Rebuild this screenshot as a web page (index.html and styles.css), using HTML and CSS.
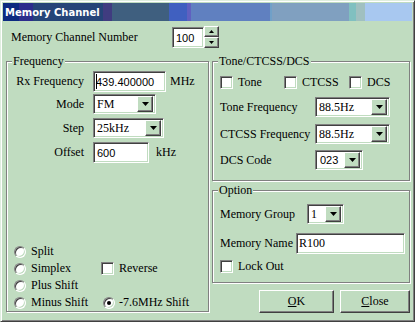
FILE: index.html
```html
<!DOCTYPE html>
<html lang="en">
<head>
    <meta charset="UTF-8">
    <title>Memory Channel</title>
    <link rel="stylesheet" href="styles.css">
</head>
<body>

    <div class="window">
        <div class="titlebar"><span class="title">Memory Channel</span></div>

        <div class="channel-row">
            <span class="chan-label">Memory Channel Number</span>
            <div class="sunken field sans spin-field">100</div>
            <div class="spin-btns">
                <div class="raised spin-btn"><svg width="5" height="3" viewBox="0 0 5 3"><polygon points="2.5,0 5,3 0,3" fill="#000"/></svg></div>
                <div class="raised spin-btn"><svg width="5" height="3" viewBox="0 0 5 3"><polygon points="0,0 5,0 2.5,3" fill="#000"/></svg></div>
            </div>
        </div>

        <div class="groups">
            <!-- left: frequency -->
            <div class="group freq">
                <div class="legend">Frequency</div>

                <div class="frow fr1">
                    <span class="flabel">Rx Frequency</span>
                    <div class="sunken field sans rx"><span class="caret"></span>439.400000</div>
                    <span class="unit mhz">MHz</span>
                </div>
                <div class="frow fr2">
                    <span class="flabel">Mode</span>
                    <div class="sunken combo mode"><span class="combo-text">FM</span><div class="raised drop"><svg width="7" height="4" viewBox="0 0 7 4"><polygon points="0,0 7,0 3.5,4" fill="#000"/></svg></div></div>
                </div>
                <div class="frow fr3">
                    <span class="flabel">Step</span>
                    <div class="sunken combo step"><span class="combo-text">25kHz</span><div class="raised drop"><svg width="7" height="4" viewBox="0 0 7 4"><polygon points="0,0 7,0 3.5,4" fill="#000"/></svg></div></div>
                </div>
                <div class="frow fr4">
                    <span class="flabel">Offset</span>
                    <div class="sunken field sans offset">600</div>
                    <span class="unit khz">kHz</span>
                </div>

                <div class="radios">
                    <div class="opt"><span class="radio"></span>Split</div>
                    <div></div>
                    <div class="opt"><span class="radio"></span>Simplex</div>
                    <div class="opt col2cb"><span class="sunken check"></span>Reverse</div>
                    <div class="opt"><span class="radio"></span>Plus Shift</div>
                    <div></div>
                    <div class="opt"><span class="radio"></span>Minus Shift</div>
                    <div class="opt col2rd"><span class="radio on"></span>-7.6MHz Shift</div>
                </div>
            </div>

            <!-- right column -->
            <div class="right-col">
                <div class="group tone">
                    <div class="legend">Tone/CTCSS/DCS</div>
                    <div class="checks">
                        <div class="opt"><span class="sunken check"></span>Tone</div>
                        <div class="opt"><span class="sunken check"></span>CTCSS</div>
                        <div class="opt"><span class="sunken check"></span>DCS</div>
                    </div>
                    <div class="trow tr1">
                        <span class="tlabel">Tone Frequency</span>
                        <div class="sunken combo tcombo"><span class="combo-text">88.5Hz</span><div class="raised drop"><svg width="7" height="4" viewBox="0 0 7 4"><polygon points="0,0 7,0 3.5,4" fill="#000"/></svg></div></div>
                    </div>
                    <div class="trow tr2">
                        <span class="tlabel">CTCSS Frequency</span>
                        <div class="sunken combo tcombo"><span class="combo-text">88.5Hz</span><div class="raised drop"><svg width="7" height="4" viewBox="0 0 7 4"><polygon points="0,0 7,0 3.5,4" fill="#000"/></svg></div></div>
                    </div>
                    <div class="trow tr3">
                        <span class="tlabel">DCS Code</span>
                        <div class="sunken combo dcs"><span class="combo-text sans">023</span><div class="raised drop"><svg width="7" height="4" viewBox="0 0 7 4"><polygon points="0,0 7,0 3.5,4" fill="#000"/></svg></div></div>
                    </div>
                </div>

                <div class="group option">
                    <div class="legend">Option</div>
                    <div class="trow or1">
                        <span class="glabel">Memory Group</span>
                        <div class="sunken combo grp"><span class="combo-text">1</span><div class="raised drop"><svg width="7" height="4" viewBox="0 0 7 4"><polygon points="0,0 7,0 3.5,4" fill="#000"/></svg></div></div>
                    </div>
                    <div class="trow or2">
                        <span class="nlabel">Memory Name</span>
                        <div class="sunken field name">R100</div>
                    </div>
                    <div class="opt lock"><span class="sunken check"></span>Lock Out</div>
                </div>

                <div class="buttons">
                    <div class="raised button ok"><u>O</u>K</div>
                    <div class="raised button close"><u>C</u>lose</div>
                </div>
            </div>
        </div>
    </div>

</body>
</html>
```

FILE: styles.css
```css
body{
    margin: 0;
    background: #c0dcc0;
    font-family: "Liberation Serif", serif;
    font-size: 12px;
    color: #000;
}

.sans{
    font-family: "Liberation Sans", sans-serif;
    font-size: 11px;
}

.window{
    width: 415px;
    height: 322px;
    box-sizing: border-box;
    border: 1px solid;
    border-color: #dfeedf #404040 #404040 #dfeedf;
    box-shadow: inset 1px 1px #fff, inset -1px -1px #808080;
    padding: 2px;
    background: #c0dcc0;
}

.titlebar{
    height: 18px;
    display: flex;
    align-items: center;
    padding-left: 2px;
    background: linear-gradient(to right,
        #0c2a80 0 16px, #2c2c8c 16px 30px, #254478 30px 100px,
        #403c80 100px 109px, #3f5f7f 109px 166px, #4060c0 166px 184px,
        #6060c0 184px 188px, #6080c0 188px 267px, #70a0c8 267px 269px,
        #80a0c0 269px 346px, #80c0c0 346px 353px, #a0c0c0 353px 362px,
        #a8c8f0 362px);
}

.title{
    color: #fff;
    font: bold 10px "DejaVu Sans", sans-serif;
}

/* 3d borders */
.sunken{
    box-sizing: border-box;
    background: #fff;
    border: 1px solid;
    border-color: #808080 #fff #fff #808080;
    box-shadow: inset 1px 1px #404040, inset -1px -1px #c0dcc0;
}

.raised{
    box-sizing: border-box;
    background: #c0dcc0;
    border: 1px solid;
    border-color: #fff #404040 #404040 #fff;
    box-shadow: inset -1px -1px #808080;
}

.field{
    display: flex;
    align-items: center;
    padding-left: 3px;
}

.caret{
    border-left: 1px solid #000;
    height: 15px;
    margin-right: -1px;
}

/* channel number */
.channel-row{
    display: flex;
    height: 22px;
    margin-top: 5px;
    padding-left: 8px;
}

.chan-label{
    width: 161px;
    line-height: 22px;
}

.spin-field{
    width: 32px;
    height: 21px;
    margin-top: 1px;
}

.spin-btns{
    display: flex;
    flex-direction: column;
}

.spin-btn{
    width: 15px;
    height: 11px;
    display: flex;
    align-items: center;
    justify-content: center;
}

/* groups */
.groups{
    display: grid;
    grid-template-columns: 203px 198px;
    column-gap: 3px;
    margin-top: 13px;
    padding-left: 3px;
}

.group{
    box-sizing: border-box;
    border: 1px solid #808080;
    box-shadow: inset 1px 1px #fff, 1px 1px #fff;
    display: flex;
    flex-direction: column;
}

.legend{
    width: fit-content;
    line-height: 14px;
    margin: -8px 0 0 5px;
    padding: 0 1px;
    background: #c0dcc0;
}

.freq{
    height: 251px;
}

.frow{
    display: flex;
    align-items: center;
}

.flabel{
    width: 77px;
    margin-right: 9px;
    text-align: right;
}

.fr1{ margin-top: 3px; }
.fr2{ margin-top: 2px; }
.fr3{ margin-top: 4px; }
.fr4{ margin-top: 4px; }

.rx{
    width: 73px;
    height: 21px;
    padding-left: 2px;
}

.offset{
    width: 56px;
    height: 21px;
}

.mhz{ margin-left: 4px; }
.khz{ margin-left: 7px; }

.combo{
    display: flex;
    align-items: center;
    height: 20px;
    padding: 2px;
}

.combo-text{
    flex: 1;
    padding-left: 1px;
}

.drop{
    width: 16px;
    height: 16px;
    display: flex;
    align-items: center;
    justify-content: center;
}

.mode{ width: 63px; }
.step{ width: 71px; }

.radios{
    margin-top: auto;
    height: 68px;
    display: grid;
    grid-template-columns: 86px 1fr;
    grid-auto-rows: 17px;
    padding-left: 7px;
}

.opt{
    display: flex;
    align-items: center;
    white-space: nowrap;
}

.radio{
    width: 12px;
    height: 12px;
    box-sizing: border-box;
    border-radius: 50%;
    background: #fff;
    border: 1px solid;
    border-color: #808080 #fff #fff #808080;
    box-shadow: inset 1px 1px #404040, inset -1px -1px #c0dcc0;
    margin-right: 5px;
    display: flex;
    align-items: center;
    justify-content: center;
}

.radio.on::after{
    content: "";
    width: 4px;
    height: 4px;
    border-radius: 50%;
    background: #000;
}

.check{
    width: 13px;
    height: 13px;
    margin-right: 5px;
}

.col2cb{ margin-left: 1px; }
.col2rd{ margin-left: 3px; }
.col2rd .radio{ margin-right: 4px; }

/* right column */
.right-col{
    display: flex;
    flex-direction: column;
}

.tone{
    height: 120px;
}

.checks{
    display: grid;
    grid-template-columns: 64px 65px auto;
    height: 15px;
    margin-top: 7px;
    padding-left: 7px;
}

.trow{
    display: flex;
    align-items: center;
    padding-left: 7px;
}

.tlabel{ width: 95px; }

.tr1{ margin-top: 7px; }
.tr2{ margin-top: 7px; }
.tr3{ margin-top: 6px; }

.tcombo{ width: 75px; }
.dcs{ width: 48px; }
.dcs .combo-text{ padding-left: 2px; }

.option{
    height: 93px;
    margin-top: 9px;
}

.glabel{ width: 87px; }
.nlabel{ width: 76px; }

.or1{ margin-top: 7px; }
.or2{ margin-top: 9px; }

.grp{ width: 37px; }

.name{
    width: 109px;
    height: 21px;
    padding-left: 2px;
}

.lock{
    margin-top: 6px;
    padding-left: 7px;
    height: 13px;
}

.buttons{
    display: flex;
    justify-content: flex-end;
    gap: 6px;
    margin-top: 7px;
}

.button{
    height: 23px;
    display: flex;
    align-items: center;
    justify-content: center;
}

.ok{ width: 75px; }
.close{ width: 70px; }
```
